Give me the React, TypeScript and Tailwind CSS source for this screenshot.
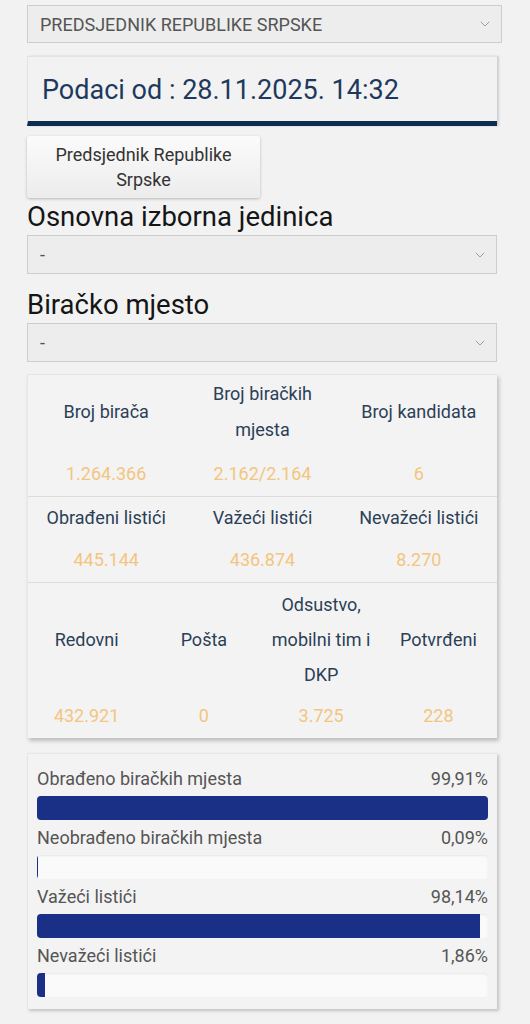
import { ChevronDown } from "lucide-react";

const font = { fontFamily: "Roboto, 'Noto Sans', sans-serif" };

function Select({ value, className = "" }: { value: string; className?: string }) {
  return (
    <div
      className={`flex items-center justify-between border border-[#cdcdcd] bg-[#ededed] pl-[12px] pr-[8px] text-[18px] text-[#555] ${className}`}
    >
      <span>{value}</span>
      <ChevronDown className="h-[16px] w-[16px] text-[#888]" strokeWidth={1.2} />
    </div>
  );
}

const row1 = [
  { label: ["Broj birača"], value: "1.264.366" },
  { label: ["Broj biračkih", "mjesta"], value: "2.162/2.164" },
  { label: ["Broj kandidata"], value: "6" },
];

const row2 = [
  { label: ["Obrađeni listići"], value: "445.144" },
  { label: ["Važeći listići"], value: "436.874" },
  { label: ["Nevažeći listići"], value: "8.270" },
];

const row3 = [
  { label: ["Redovni"], value: "432.921" },
  { label: ["Pošta"], value: "0" },
  { label: ["Odsustvo,", "mobilni tim i", "DKP"], value: "3.725" },
  { label: ["Potvrđeni"], value: "228" },
];

const bars = [
  { label: "Obrađeno biračkih mjesta", pct: 99.91, text: "99,91%" },
  { label: "Neobrađeno biračkih mjesta", pct: 0.09, text: "0,09%" },
  { label: "Važeći listići", pct: 98.14, text: "98,14%" },
  { label: "Nevažeći listići", pct: 1.86, text: "1,86%" },
];

function StatRow({
  items,
  cols,
  lead,
  pt,
  gap,
  divider,
}: {
  items: { label: string[]; value: string }[];
  cols: string;
  lead: string;
  pt: string;
  gap: string;
  divider: boolean;
}) {
  return (
    <div className={`grid ${cols} ${pt} pb-[4px] ${divider ? "border-b border-[#dcdcdc]" : ""}`}>
      {items.map((it) => (
        <div key={it.value} className="flex flex-col items-center text-center">
          <div className={`flex flex-1 flex-col justify-center text-[#2b3f57] ${lead}`}>
            {it.label.map((l) => (
              <span key={l}>{l}</span>
            ))}
          </div>
          <div className={`${gap} leading-[36px] text-[#f3c57f]`}>{it.value}</div>
        </div>
      ))}
    </div>
  );
}

export default function App() {
  return (
    <div className="min-h-[1024px] bg-[#f2f2f2] pl-[27px] pr-[28px] pt-[5px] text-[18px]" style={font}>
      <Select value="PREDSJEDNIK REPUBLIKE SRPSKE" className="h-[38px]" />

      {/* Podaci */}
      <div className="mr-[5px] mt-[13px] border-b-[5px] border-l border-t border-b-[#0e2d52] border-l-[#e2e2e2] border-t-[#e2e2e2] bg-[#f2f2f2] pl-[14px] pt-[17px] pb-[15px] shadow-[2px_0_2px_rgba(0,0,0,0.15)]">
        <div className="text-[27px] leading-[32px] text-[#1d3a5e]">Podaci od : 28.11.2025. 14:32</div>
      </div>

      <button className="mt-[10px] flex w-[233px] flex-col items-center rounded-[3px] bg-gradient-to-b from-[#fbfbfb] to-[#ececec] py-[6px] text-[18px] leading-[25px] text-[#333] shadow-[0_1px_3px_rgba(0,0,0,0.25)]">
        <span>Predsjednik Republike</span>
        <span>Srpske</span>
      </button>

      <div className="mt-[4px] text-[27.5px] leading-[30px] text-[#151515]">Osnovna izborna jedinica</div>
      <Select value="-" className="mr-[5px] mt-[3px] h-[39px]" />

      <div className="mt-[16px] text-[27.5px] leading-[30px] text-[#151515]">Biračko mjesto</div>
      <Select value="-" className="mr-[5px] mt-[3px] h-[39px]" />

      {/* Stats */}
      <div className="mr-[5px] mt-[12px] border-l border-t border-[#e6e6e6] bg-[#f3f3f3] shadow-[2px_3px_4px_rgba(0,0,0,0.22)]">
        <StatRow items={row1} cols="grid-cols-3" lead="leading-[36px]" pt="pt-[1px]" gap="mt-[8px]" divider />
        <StatRow items={row2} cols="grid-cols-3" lead="leading-[36px]" pt="pt-[3px]" gap="mt-[6px]" divider />
        <StatRow items={row3} cols="grid-cols-4" lead="leading-[35px]" pt="pt-[4px]" gap="mt-[6px]" divider={false} />
      </div>

      {/* Progress */}
      <div className="mr-[5px] mt-[15px] border-l border-t border-[#e6e6e6] bg-[#f3f3f3] px-[9px] pb-[5px] pt-[14px] shadow-[2px_2px_3px_rgba(0,0,0,0.2)]">
        {bars.map((b) => (
          <div key={b.label} className="mb-[7px]">
            <div className="flex justify-between leading-[21px] text-[#555]">
              <span>{b.label}</span>
              <span>{b.text}</span>
            </div>
            <div className="mt-[7px] h-[24px] overflow-hidden rounded-[4px] bg-[#fafafa] shadow-[inset_0_1px_2px_rgba(0,0,0,0.08)]">
              <div className="h-full bg-[#1a3087]" style={{ width: `${b.pct}%` }} />
            </div>
          </div>
        ))}
      </div>
    </div>
  );
}
